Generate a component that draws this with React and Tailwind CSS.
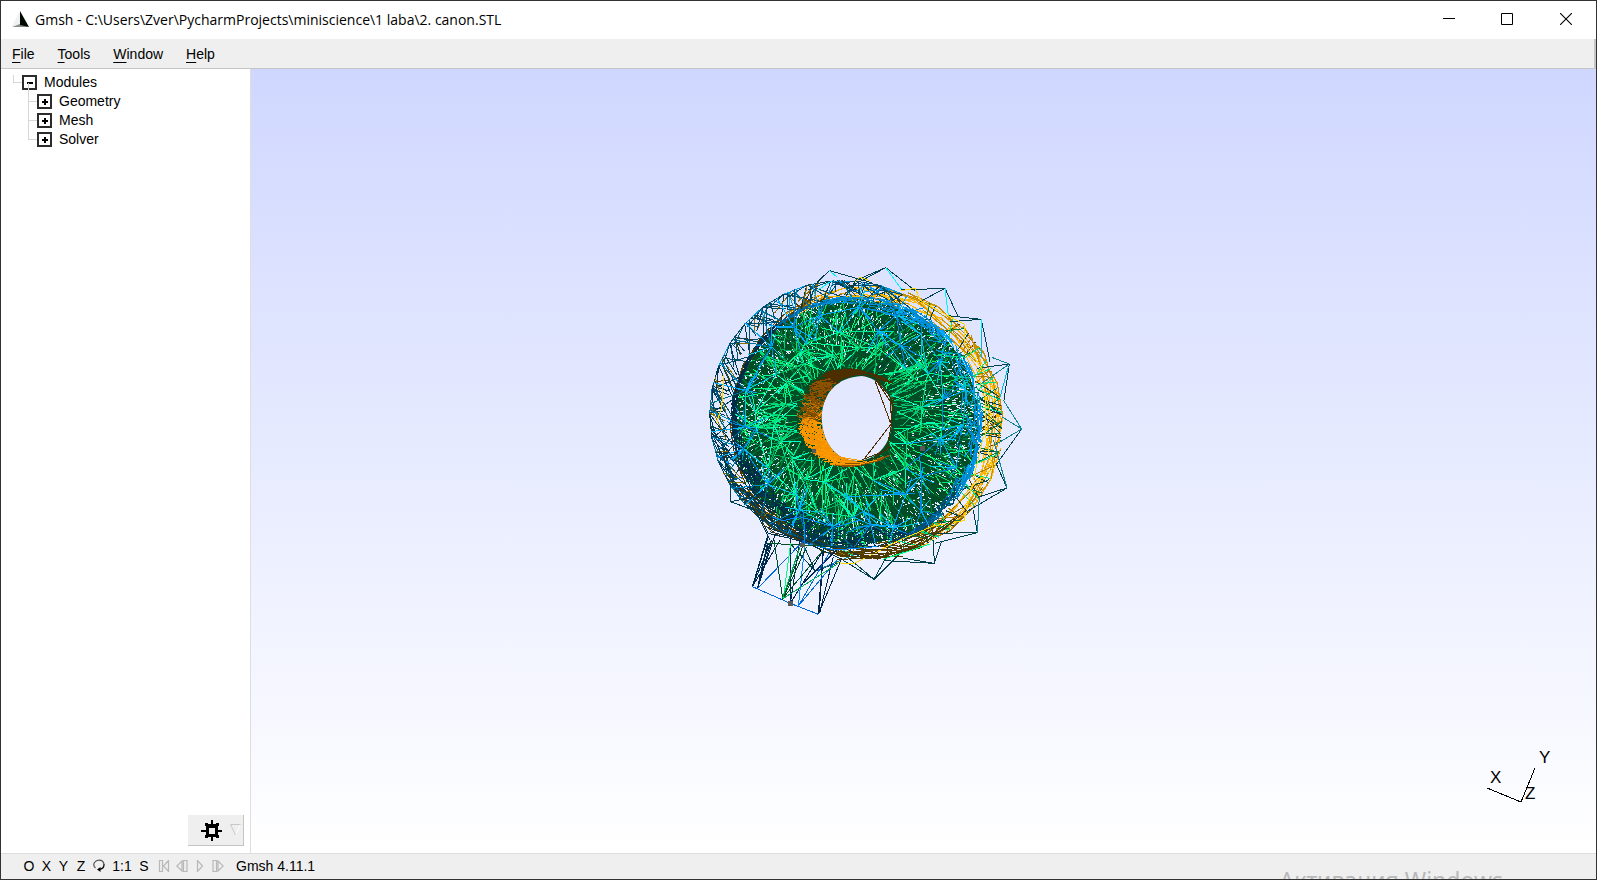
import React from "react";

/* ---------- wireframe geometry ---------- */

function makeRandom(seed) {
  let s = seed;
  return () => {
    s = (s * 1664525 + 1013904223) % 4294967296;
    return s / 4294967296;
  };
}

const rnd = makeRandom(4111);
const TAU = Math.PI * 2;
const at = (cx, cy, r, a) => [cx + r * Math.cos(a), cy + r * Math.sin(a)];
const mix = (p, q, t) => [p[0] + (q[0] - p[0]) * t, p[1] + (q[1] - p[1]) * t];
const seg = (p, q) => `M${Math.round(p[0])} ${Math.round(p[1])}L${Math.round(q[0])} ${Math.round(q[1])}`;
const pick = (list) => list[Math.floor(rnd() * list.length)];

const shell = (a) => at(460, 492, 401, a);
const rim = (a) => at(500, 517, 376, a);
const bore = (a) => at(468, 503, 148, a);
const boreBack = (a) => at(528, 505, 133, a);
const body = (a, t) => mix(bore(a), rim(a), t);

const light = (a, dir) => Math.cos(a - dir);

/* collects segments into one path per colour */
function layer() {
  const buckets = new Map();
  return {
    add(color, p, q) {
      buckets.set(color, (buckets.get(color) || "") + seg(p, q));
    },
    list() {
      return [...buckets.entries()];
    },
  };
}

function goldBand() {
  const out = layer();
  const n = 26;
  for (let pass = 0; pass < 8; pass++) {
    const offset = rnd();
    for (let i = 0; i < n; i++) {
      const a = ((i + offset) / n) * TAU;
      const b = a + (TAU / n) * (1 + Math.floor(rnd() * 2));
      const k = light(a, -0.8);
      const c = k > 0.6 ? pick(["#ffb700", "#ffb700", "#c78f00"]) : k > 0 ? pick(["#d99b00", "#8a6500", "#ffb700"]) : pick(["#4d3800", "#4d3800", "#664b00"]);
      const r1 = pass < 2 ? 409 : 409 - rnd() * 50;
      const r2 = pass < 2 ? 409 : 409 - rnd() * 50;
      out.add(c, at(530, 518, r1, a), at(530, 518, r2, b));
    }
  }
  for (let i = 0; i < 90; i++) {
    const a = -1.1 + rnd() * 2.9;
    out.add(pick(["#00803f", "#a87b00", "#4d3800", "#00e080", "#00404d"]), at(530, 518, 406, a), rim(a + (rnd() - 0.5) * 0.3));
  }
  return out.list();
}

function shellBand() {
  const out = layer();
  const n = 34;
  for (let i = 0; i < n; i++) {
    const a = (i / n) * TAU;
    if (Math.cos(a - 0.1) > 0.3) continue;
    const b = ((i + 1) / n) * TAU;
    const top = Math.sin(a) < -0.3;
    const dark = top ? "#004a66" : "#00394f";
    const bright = top ? "#0099e6" : "#006a9e";
    out.add(i % 2 ? bright : dark, shell(a), shell(b));
    out.add(dark, at(460, 492, 388, a), shell(b));
    out.add("#00394f", rim(a), shell(b));
    out.add(dark, rim(b), shell(a));
    for (let j = 0; j < 8; j++) {
      const c = pick([dark, dark, bright, "#003f4d", "#00506b", "#00405c", "#8a7000", "#4d3800"]);
      out.add(c, shell(a + rnd() * 0.1), mix(rim(a + (rnd() - 0.5) * 0.4), shell(a + (rnd() - 0.5) * 0.4), rnd() * 0.5));
    }
  }
  for (let i = 0; i < 60; i++) {
    const a = 1.5 + rnd() * 1.2;
    const b = a + 0.08 + rnd() * 0.25;
    out.add(pick(["#00334d", "#003f4d", "#4d3800", "#00405c"]), at(460, 492, 401 + rnd() * 6 - rnd() * 30, a), at(460, 492, 401 - rnd() * 30, b));
  }
  return out.list();
}

function specks(count) {
  const out = layer();
  for (let i = 0; i < count; i++) {
    const a = rnd() * TAU;
    const t = 0.08 + Math.sqrt(rnd()) * 0.88;
    const d = (rnd() - 0.5) * 0.02;
    out.add("#e0e5ff", body(a, t), body(a + d, t + 0.01 + rnd() * 0.04));
  }
  return out.list();
}

function greenLines(count, tones) {
  const out = layer();
  for (let i = 0; i < count; i++) {
    const a = rnd() * TAU;
    const t = rnd() * 0.95 - 0.1;
    const u = Math.min(1, t + 0.12 + rnd() * 0.36);
    out.add(pick(tones), body(a, Math.max(0, t)), body(a + (rnd() - 0.5) * 0.3, u));
  }
  return out.list();
}

function rimBand() {
  const out = layer();
  for (let i = 0; i < 520; i++) {
    const a = rnd() * TAU;
    const k = light(a, -0.45);
    const low = Math.max(0, light(a, 1.75));
    const width = k > 0 ? 12 + 60 * k * rnd() : 12 + 60 * low;
    const r1 = 380 - rnd() * width;
    const r2 = 380 - rnd() * width;
    const b = a + 0.05 + rnd() * 0.16;
    let c;
    if (k > 0.6) c = pick(["#0088cc", "#00aaff", "#0095e6"]);
    else if (k > 0.05) c = Math.sin(a) > 0.5 ? pick(["#005580", "#00406b", "#0077b3"]) : pick(["#0077b3", "#0095dd", "#0088cc"]);
    else if (k > -0.3) c = Math.sin(a) > 0 ? "#00334d" : "#006699";
    else c = pick(["#00334d", "#00334d", "#002b45"]);
    out.add(c, at(500, 517, r1, a), at(500, 517, r2, b));
  }
  return out.list();
}

function meshStars() {
  const out = layer();
  const rings = [0.02, 0.28, 0.55, 0.8];
  const n = 19;
  const nodes = rings.map((t, ri) =>
    Array.from({ length: n }, (_, i) => {
      const a = ((i + (ri % 2) * 0.5 + (rnd() - 0.5) * 0.8) / n) * TAU;
      return body(a, t + (ri > 0 ? (rnd() - 0.5) * 0.18 : 0));
    })
  );
  for (let ri = 1; ri < rings.length; ri++) {
    for (let i = 0; i < n; i++) {
      const p = nodes[ri][i];
      const a = (i / n) * TAU;
      const blue = ri === 3 || (ri === 2 && Math.cos(a) > -0.2 && rnd() < 0.5);
      const tones = blue ? ["#00aaff", "#00aaff", "#0088dd", "#00c8e6"] : ["#00ff99", "#00ffc0", "#00e68a"];
      if (rnd() < 0.7) out.add(pick(tones), p, nodes[ri][(i + 1) % n]);
      out.add(pick(tones), p, nodes[ri - 1][i]);
      if (rnd() < 0.7) out.add(pick(tones), p, nodes[ri - 1][(i + 1) % n]);
      const fan = blue ? 6 : 4 + Math.floor(rnd() * 5);
      for (let k = 0; k < fan; k++) {
        out.add(pick(blue ? tones : ["#00ff99", "#00e673", "#00b35a", "#00cc7a", "#00ffc0"]), p, at(p[0], p[1], 25 + rnd() * 55, rnd() * TAU));
      }
    }
  }
  for (let i = 0; i < n; i++) {
    const a = (i / n) * TAU;
    if (Math.cos(a) < 0.3) {
      const p = nodes[3][i];
      const b = Math.atan2(p[1] - 492, p[0] - 460);
      out.add("#00aaff", p, shell(b));
      out.add("#0088cc", p, shell(b + 0.16));
      out.add("#006f94", p, shell(b - 0.16));
    }
  }
  return out.list();
}

function tunnel() {
  const out = layer();
  for (let i = 0; i < 900; i++) {
    const a = Math.PI * 0.36 + rnd() * Math.PI * 1.3;
    const d = (rnd() - 0.5) * 0.5;
    const t = rnd() * 0.7;
    const k = a / Math.PI;
    let c;
    if (k > 1.28) c = "#4d2e00";
    else if (k > 1.12) c = pick(["#8a5200", "#663d00", "#4d2e00"]);
    else if (k > 0.98) c = pick(["#c47600", "#b36b00", "#804d00"]);
    else if (k > 0.58) c = pick(["#ff9900", "#ff9900", "#ff9900", "#f29100"]);
    else c = pick(["#c47600", "#8a5200"]);
    out.add(c, mix(bore(a), boreBack(a), t), mix(bore(a + d), boreBack(a + d), Math.min(1, t + 0.4)));
  }
  return out.list();
}

const BACK_LAYERS = [goldBand(), shellBand()];
const RING_LAYERS = [
  specks(1200),
  greenLines(240, ["#004d26", "#004d26", "#003d2a"]),
  greenLines(320, ["#008040", "#00a854", "#00713a", "#00e673"]),
  specks(550),
  greenLines(260, ["#004d26", "#004d26", "#004d26", "#00b35a"]),
  greenLines(150, ["#00e673", "#00ff80", "#00cc7a"]),
  rimBand(),
  meshStars(),
];
const TUNNEL_LAYER = tunnel();

const DETAILS = [
  ["#00404d", "M380 98L418 62L545 98M470 116L587 53L676 122M495 92L587 53M633 120L765 115L690 155M765 115L803 197M775 197L874 208L780 215M874 208L900 335M905 322L958 342L860 355M958 342L942 450M918 640L951 714L830 785M910 570L951 714L868 740M850 780L862 848L720 850M862 848L735 880M730 870L733 940L585 932M755 872L733 940L640 925M450 925L552 988L640 900M470 920L552 988L587 925M300 880L375 963L440 940M375 963L330 860M122 700L122 755L200 740M122 755L215 790M995 537L920 642"],
  ["#0d8296", "M940 450L995 537L935 500M995 537L915 585M868 740L862 848M905 322L958 342M875 400L958 342M910 570L951 714M375 963L490 915"],
  ["#00f2ff", "M418 62L440 80M587 53L635 118M765 115L775 197M874 208L873 310M380 122L430 90"],
  ["#00b8db", "M873 240L873 325M955 350L930 442"],
  ["#ffd500", "M495 95L510 82L540 92M633 122L676 115L690 150L760 190L822 222L824 280L885 370M885 432L905 500L885 550L908 655L845 710L822 812L730 828L630 870L490 942L440 938M885 430L885 550M102 375L95 470L80 520M850 690L880 560"],
  ["#00334d", "M125 470L128 545L145 630L180 710L240 785L330 845L435 880L560 890L640 862M235 850L187 1010L245 870L202 1016L232 880M210 800L235 850L300 865L440 905M200 790L240 870M228 830L330 870L450 925M240 845L420 890"],
  ["#4d3800", "M240 780L330 860L440 915L560 925L680 885L800 800M445 905L580 912L700 868M430 895L600 900L720 850M640 890L760 840L830 780M450 918L640 918M180 760L240 830L330 870M440 930L580 918L690 890M560 928L700 880L820 790M215 820L270 860"],
  ["#00264d", "M235 860L187 1010L202 1016L255 855M301 860L301 1060M301 1060L400 900M301 1060L330 870M385 1093L400 895M385 1093L455 925M390 1085L430 920M400 905L388 1085M340 1000L440 900M202 1016L235 880M187 1010L270 870"],
  ["#0066d9", "M187 1010L301 1060L385 1093M202 1016L345 868M325 1068L440 930M325 1068L420 905M202 1016L187 1010"],
  ["#0088ff", "M325 1068L345 880L340 780M245 800L280 812L330 800L435 832L510 810M345 880L435 900L560 890"],
  ["#004d26", "M252 870L278 1045L340 885M278 1045L400 900M280 1045L350 890M235 880L430 890"],
  ["#00ff80", "M302 880L280 1045M580 928L720 882"],
  ["#00a854", "M280 1045L445 940M278 1045L330 890"],
  ["#4d2e00", "M555 385L600 440L605 520L590 600L515 630M558 390L608 465L602 520M555 392L602 520M520 630L605 520M612 440L606 480M540 632L600 590M430 360L550 380L575 400"],
  ["#ff9900", "M395 590L430 630L520 640M400 600L440 640L500 645L560 630M410 615L530 635"],
];

function Strokes({ items }) {
  return items.map(([color, d], i) => <path key={i} d={d} stroke={color} />);
}

function Model() {
  return (
    <svg
      viewBox="0 0 1050 1140"
      className="absolute left-[439px] top-[181px] h-[380px] w-[350px]"
      fill="none"
      strokeWidth="3"
      shapeRendering="crispEdges"
      role="img"
      aria-label="Mesh view"
    >
      <defs>
        <clipPath id="bore-clip">
          <path clipRule="evenodd" d="M0 0H1050V1140H0ZM395 505C397 430 440 382 515 378C570 385 602 430 605 470V525C600 580 570 620 515 632C440 640 397 580 395 505Z" />
        </clipPath>
      </defs>
      <g clipPath="url(#bore-clip)">
        {BACK_LAYERS.map((items, i) => (
          <Strokes key={i} items={items} />
        ))}
        <circle cx="500" cy="517" r="366" fill="#004d26" />
        {RING_LAYERS.map((items, i) => (
          <Strokes key={i} items={items} />
        ))}
        <Strokes items={TUNNEL_LAYER} />
      </g>
      <Strokes items={DETAILS} />
      <path fill="#595959" d="M690 588H705V603H690ZM294 1053H309V1068H294ZM366 598H378V610H366ZM330 878H345V890H330Z" />
    </svg>
  );
}

function Axes() {
  return (
    <svg viewBox="0 0 80 60" className="absolute bottom-[47px] right-[36px] h-[60px] w-[80px]" role="img" aria-label="Axes">
      <path d="M7 42L41 56L55 22" fill="none" stroke="#000" shapeRendering="crispEdges" />
      <g fill="#000" className="font-['Liberation_Sans',sans-serif] text-[17px]">
        <text x="10" y="37">X</text>
        <text x="59" y="17">Y</text>
        <text x="45" y="53">Z</text>
      </g>
    </svg>
  );
}

/* ---------- window chrome ---------- */

function TitleBar() {
  const button = "flex h-full w-[58px] items-center justify-center";
  return (
    <header className="flex h-[38px] shrink-0 items-center bg-white pb-[2px]">
      <svg viewBox="0 0 18 18" className="ml-[11px] h-[18px] w-[18px]" aria-hidden="true">
        <path d="M8 1L0 16L8 15Z" fill="#f1f1f1" />
        <path d="M0 17L8 14L17 17Z" fill="#8d8d8d" />
        <path d="M8 1V15L17 17Z" fill="#000a00" />
      </svg>
      <h1 className="ml-[5px] flex-1 whitespace-nowrap font-['Open_Sans',sans-serif] text-[14px] text-black">
        Gmsh - C:\Users\Zver\PycharmProjects\miniscience\1 laba\2. canon.STL
      </h1>
      <button aria-label="Minimize" className={button}>
        <svg viewBox="0 0 12 12" className="h-3 w-3"><path d="M0 5.5H12" stroke="#000" /></svg>
      </button>
      <button aria-label="Maximize" className={button}>
        <svg viewBox="0 0 12 12" className="h-3 w-3"><path d="M.5 .5H11.5V11.5H.5Z" fill="none" stroke="#000" /></svg>
      </button>
      <button aria-label="Close" className="flex h-full w-[60px] items-center justify-center">
        <svg viewBox="0 0 12 12" className="h-3 w-3"><path d="M0 0L12 12M12 0L0 12" stroke="#000" strokeWidth="1.1" /></svg>
      </button>
    </header>
  );
}

function MenuBar() {
  return (
    <nav className="flex h-[30px] shrink-0 items-center gap-[23px] border-b border-r-2 border-[#c6c6c6] bg-[#efefef] pl-[11px]">
      {["File", "Tools", "Window", "Help"].map((name) => (
        <button key={name} className="leading-5">
          <span className="underline decoration-1 underline-offset-3">{name[0]}</span>
          {name.slice(1)}
        </button>
      ))}
    </nav>
  );
}

function ToggleBox({ open }) {
  return (
    <svg viewBox="0 0 15 15" className="h-[15px] w-[15px] shrink-0" shapeRendering="crispEdges" aria-hidden="true">
      <path d="M1 1H14V14H1Z" fill="#fff" stroke="#2c2c2c" strokeWidth="2" />
      <path d={open ? "M5 7H11V9H5Z" : "M5 7H7V5H9V7H11V9H9V11H7V9H5Z"} fill="#000" />
    </svg>
  );
}

function Tree() {
  return (
    <div className="pl-3 pt-1">
      <button className="flex h-[19px] items-center" aria-expanded="true">
        <span className="mb-2 h-2 w-[9px] border-b border-l border-[#d6d6d6]" />
        <ToggleBox open />
        <span className="ml-[7px]">Modules</span>
      </button>
      <ul className="pl-[15px]">
        {["Geometry", "Mesh", "Solver"].map((name) => (
          <li key={name}>
            <button className="flex h-[19px] items-center" aria-expanded="false">
              <span className="mb-[19px] h-[19px] w-[9px] border-b border-l border-[#d6d6d6]" />
              <ToggleBox />
              <span className="ml-[7px]">{name}</span>
            </button>
          </li>
        ))}
      </ul>
    </div>
  );
}

function GearButton() {
  return (
    <button aria-label="Options" className="mb-[7px] mr-[6px] flex h-[31px] w-[56px] items-center self-end border-b border-r border-[#c4c4c4] bg-[#efefef] pl-[13px]">
      <svg viewBox="0 0 21 21" className="h-[21px] w-[21px]" shapeRendering="crispEdges">
        <path
          fillRule="evenodd"
          fill="#000"
          d="M10 0H12V4H15V3H18V6H17V10H21V12H17V15H18V18H15V17H12V21H10V17H7V18H4V15H5V12H0V10H5V6H4V3H7V4H10ZM8 8V14H14V8Z"
        />
      </svg>
      <svg viewBox="0 0 11 12" className="ml-2 h-3 w-[11px]">
        <path d="M10 1L5.500 11" stroke="#fff" fill="none" />
        <path d="M10.500 .5H.5L5.500 11" stroke="#c8c8c8" fill="none" />
      </svg>
    </button>
  );
}

function StatusBar() {
  const cell = "flex h-5 w-[18px] items-center justify-center";
  const axis = "flex h-5 w-[17px] items-center justify-center";
  const off = { fill: "none", stroke: "#b8b8b8", strokeWidth: 1.2 };
  return (
    <footer className="relative flex h-[26px] shrink-0 items-center overflow-hidden border-t border-[#dedede] bg-[#efefef] pb-px pl-[19px]">
      {["O", "X", "Y", "Z"].map((t) => (
        <button key={t} className={t === "O" || t === "Z" ? cell : axis}>{t}</button>
      ))}
      <button aria-label="Rotate" className={axis}>
        <svg viewBox="0 0 12 14" className="h-[14px] w-3" fill="none">
          <path d="M2.500 9C.8 7.500 .5 5 1.500 3.500C2.500 2 4 1.200 6 1.200C8.500 1.200 10.500 2.800 11 5" stroke="#555" strokeWidth="1.200" />
          <path d="M11 5C11.200 7.500 9.500 10 6 10.500" stroke="#000" strokeWidth="1.200" />
          <path d="M4 10.500L7.500 8V13Z" fill="#000" />
        </svg>
      </button>
      <button className="h-5 w-[30px]">1:1</button>
      <button className={axis + " mr-px pr-[3px]"}>S</button>
      <button aria-label="First step" disabled className={cell}>
        <svg viewBox="0 0 12 12" className="h-3 w-3" {...off}><path d="M1.500 .5V11.500H4.500V.5ZM10.500 .5V11.500L5.500 6Z" /></svg>
      </button>
      <button aria-label="Previous step" disabled className={cell}>
        <svg viewBox="0 0 12 12" className="h-3 w-3" {...off}><path d="M6 1V11L.8 6ZM7.500 .5H11V11.500H7.500Z" /></svg>
      </button>
      <button aria-label="Play" disabled className={cell}>
        <svg viewBox="0 0 12 12" className="h-3 w-3" {...off}><path d="M3.500 .5V11.500L8.500 6Z" /></svg>
      </button>
      <button aria-label="Next step" disabled className={cell}>
        <svg viewBox="0 0 12 12" className="h-3 w-3" {...off}><path d="M1 .5H4.500V11.500H1ZM6 1V11L11.200 6Z" /></svg>
      </button>
      <span className="ml-[9px]">Gmsh 4.11.1</span>
      <span className="absolute right-[93px] top-[10px] whitespace-nowrap font-['Noto_Sans',sans-serif] text-[23px] leading-8 text-[#b9b9b9]">
        Активация Windows
      </span>
    </footer>
  );
}

export default function App() {
  return (
    <div className="flex h-screen flex-col border border-[#323232] bg-white font-['Liberation_Sans',Arial,sans-serif] text-[14px] text-black">
      <TitleBar />
      <MenuBar />
      <main className="flex min-h-0 flex-1">
        <aside className="flex w-[250px] shrink-0 flex-col justify-between border-r border-[#dedede] bg-white">
          <Tree />
          <GearButton />
        </aside>
        <section className="relative flex-1 overflow-hidden bg-linear-to-b from-[#d0d7ff] to-white">
          <Model />
          <Axes />
        </section>
      </main>
      <StatusBar />
    </div>
  );
}
